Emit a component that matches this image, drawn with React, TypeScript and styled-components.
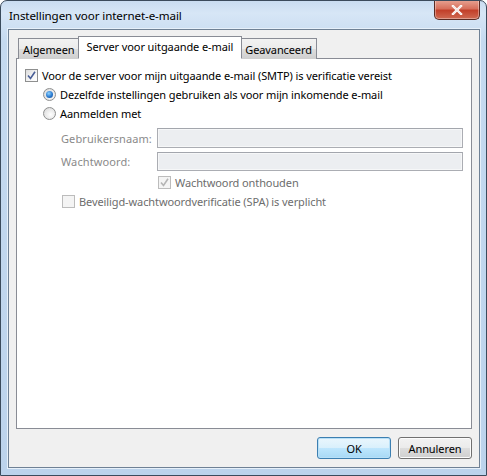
import React from "react";
import styled, { createGlobalStyle } from "styled-components";

const Global = createGlobalStyle`
  html, body { margin: 0; padding: 0; background: #ffffff; }
  * { box-sizing: border-box; }
`;

const Window = styled.div`
  width: 487px;
  height: 476px;
  border: 1px solid #3b4b5c;
  border-radius: 7px 7px 0 0;
  background: linear-gradient(180deg, #c9dcf1 0%, #d7e6f6 12px, #c5daf0 40px, #bcd3ec 100%);
  display: flex;
  flex-direction: column;
  font-family: "Noto Sans", "Open Sans", sans-serif;
  font-size: 11px;
  letter-spacing: -0.1px;
  color: #000;
  overflow: hidden;
`;

const TitleBar = styled.div`
  height: 28px;
  display: flex;
  align-items: flex-start;
  padding-left: 8px;
`;

const Title = styled.div`
  margin-top: 7px;
  font-size: 11.6px;
  color: #000;
  letter-spacing: -0.1px;
`;

const CloseButton = styled.div`
  margin-left: auto;
  margin-right: 6px;
  width: 46px;
  height: 20px;
  margin-top: -1px;
  border: 1px solid #5a2b23;
  border-top: none;
  border-radius: 0 0 5px 5px;
  background: linear-gradient(180deg, #e8a494 0%, #d7705c 45%, #c2402a 55%, #cf6a52 100%);
  display: flex;
  align-items: center;
  justify-content: center;
  box-shadow: inset 0 0 0 1px rgba(255, 255, 255, 0.35);
`;

const Client = styled.div`
  flex: 1;
  margin: 0 6px 7px 7px;
  border: 1px solid #6f8195;
  outline: 1px solid #e6f0fa;
  background: #f0f0f0;
  display: flex;
  flex-direction: column;
  padding: 6px 7px 0 7px;
`;

const TabStrip = styled.div`
  display: flex;
  align-items: flex-end;
  height: 23px;
  margin-bottom: -1px;
  padding-left: 2px;
  position: relative;
  z-index: 1;
`;

const Tab = styled.div<{ $active?: boolean }>`
  height: ${(p) => (p.$active ? "23px" : "21px")};
  padding: 0 ${(p) => (p.$active ? "8px" : "4px")};
  margin: 0 ${(p) => (p.$active ? "-2px" : "0")};
  border: 1px solid #898c95;
  border-bottom: ${(p) => (p.$active ? "1px solid #ffffff" : "none")};
  background: ${(p) =>
    p.$active ? "#ffffff" : "linear-gradient(180deg, #f2f2f2 0%, #ebebeb 50%, #dddddd 51%, #cfcfcf 100%)"};
  display: flex;
  align-items: ${(p) => (p.$active ? "flex-start" : "center")};
  padding-top: ${(p) => (p.$active ? "2px" : "1px")};
  position: relative;
  z-index: ${(p) => (p.$active ? 2 : 1)};
`;

const Panel = styled.div`
  height: 371px;
  border: 1px solid #898c95;
  background: #ffffff;
  display: flex;
  flex-direction: column;
  padding: 7px 0 0 8px;
`;

const Row = styled.div<{ $indent: number; $gap?: number }>`
  display: flex;
  align-items: center;
  height: 19px;
  padding-left: ${(p) => p.$indent}px;
  margin-top: ${(p) => p.$gap ?? 0}px;
`;

const Label = styled.span<{ $disabled?: boolean }>`
  margin-left: 4px;
  color: ${(p) => (p.$disabled ? "#6d6d6d" : "#000")};
  white-space: nowrap;
`;

const Box = styled.span<{ $disabled?: boolean }>`
  width: 13px;
  height: 13px;
  border: 1px solid ${(p) => (p.$disabled ? "#bcbcbc" : "#8e8f8f")};
  background: ${(p) =>
    p.$disabled ? "#f4f4f4" : "linear-gradient(135deg, #dcdcdc 0%, #f5f5f5 60%, #ffffff 100%)"};
  display: inline-flex;
  align-items: center;
  justify-content: center;
  flex: none;
`;

const Radio = styled.span<{ $checked?: boolean }>`
  width: 13px;
  height: 13px;
  border-radius: 50%;
  border: 1px solid #8e8f8f;
  background: radial-gradient(circle at 60% 60%, #ffffff 0%, #e6e6e6 60%, #cfcfcf 100%);
  display: inline-flex;
  align-items: center;
  justify-content: center;
  flex: none;
  &::after {
    content: "";
    display: ${(p) => (p.$checked ? "block" : "none")};
    width: 7px;
    height: 7px;
    border-radius: 50%;
    background: radial-gradient(circle at 40% 35%, #8fd3ff 0%, #2a7ad0 55%, #184a8c 100%);
  }
`;

const FieldRow = styled.div<{ $gap: number }>`
  display: flex;
  align-items: center;
  margin-top: ${(p) => p.$gap}px;
  padding-left: 36px;
`;

const FieldLabel = styled.span`
  width: 96px;
  color: #8a8a8a;
  white-space: nowrap;
  letter-spacing: 0.1px;
`;

const Input = styled.div<{ $h: number }>`
  width: 306px;
  height: ${(p) => p.$h}px;
  border: 1px solid #abadb3;
  border-top-color: #a3a6ad;
  background: #eceef1;
  box-shadow: inset 0 0 0 1px #f6f7f8;
`;

const Footer = styled.div`
  display: flex;
  justify-content: flex-end;
  gap: 7px;
  padding: 8px 0 0 0;
`;

const Button = styled.div<{ $default?: boolean }>`
  width: 74px;
  height: 22px;
  border: 1px solid ${(p) => (p.$default ? "#3c7fb1" : "#707070")};
  border-radius: 3px;
  background: ${(p) =>
    p.$default
      ? "linear-gradient(180deg, #eaf6fd 0%, #d9f0fc 50%, #bee6fd 51%, #a7d9f5 100%)"
      : "linear-gradient(180deg, #f2f2f2 0%, #ebebeb 50%, #dddddd 51%, #cfcfcf 100%)"};
  box-shadow: inset 0 0 0 1px ${(p) => (p.$default ? "#b8e0f7" : "#fcfcfc")};
  display: flex;
  align-items: center;
  justify-content: center;
  color: #000;
`;

const Check = ({ color }: { color: string }) => (
  <svg width="9" height="9" viewBox="0 0 9 9">
    <path d="M1 4.5 L3.5 7.5 L8 0.8" fill="none" stroke={color} strokeWidth="1.6" />
  </svg>
);

export default function App() {
  return (
    <>
      <Global />
      <Window>
        <TitleBar>
          <Title>Instellingen voor internet-e-mail</Title>
          <CloseButton>
            <svg width="12" height="10" viewBox="0 0 12 10">
              <path d="M2 1 L10 9 M10 1 L2 9" stroke="#ffffff" strokeWidth="2.4" strokeLinecap="square" />
              <path d="M2 1 L10 9 M10 1 L2 9" stroke="#f4e8e6" strokeWidth="1.4" />
            </svg>
          </CloseButton>
        </TitleBar>
        <Client>
          <TabStrip>
            <Tab>Algemeen</Tab>
            <Tab $active>Server voor uitgaande e-mail</Tab>
            <Tab>Geavanceerd</Tab>
          </TabStrip>
          <Panel>
            <Row $indent={0}>
              <Box>
                <Check color="#4a5f97" />
              </Box>
              <Label>Voor de server voor mijn uitgaande e-mail (SMTP) is verificatie vereist</Label>
            </Row>
            <Row $indent={18}>
              <Radio $checked />
              <Label>Dezelfde instellingen gebruiken als voor mijn inkomende e-mail</Label>
            </Row>
            <Row $indent={18}>
              <Radio />
              <Label>Aanmelden met</Label>
            </Row>
            <FieldRow $gap={5}>
              <FieldLabel>Gebruikersnaam:</FieldLabel>
              <Input $h={20} />
            </FieldRow>
            <FieldRow $gap={4}>
              <FieldLabel>Wachtwoord:</FieldLabel>
              <Input $h={19} />
            </FieldRow>
            <Row $indent={133} $gap={2}>
              <Box $disabled>
                <Check color="#b5b5b5" />
              </Box>
              <Label $disabled>Wachtwoord onthouden</Label>
            </Row>
            <Row $indent={37}>
              <Box $disabled />
              <Label $disabled>Beveiligd-wachtwoordverificatie (SPA) is verplicht</Label>
            </Row>
          </Panel>
          <Footer>
            <Button $default>OK</Button>
            <Button>Annuleren</Button>
          </Footer>
        </Client>
      </Window>
    </>
  );
}
